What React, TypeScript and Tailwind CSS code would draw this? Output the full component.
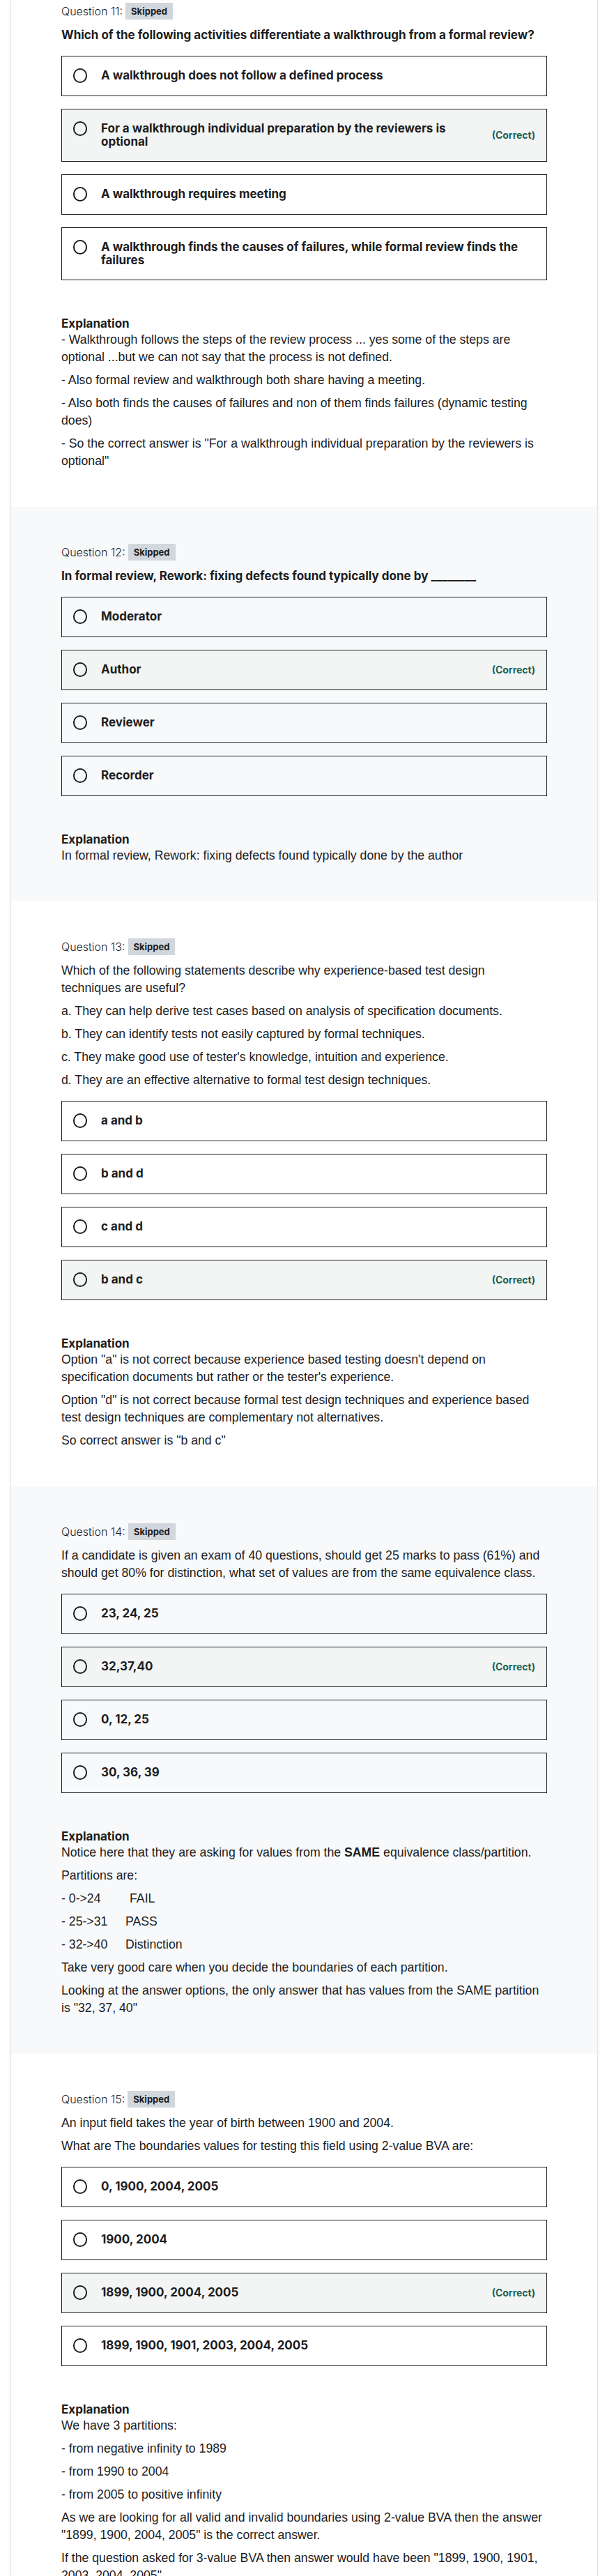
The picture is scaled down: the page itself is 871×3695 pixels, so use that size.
import type { ReactNode } from 'react';

type Option = { text: string; correct?: boolean };

type Question = {
  num: number;
  prompt: ReactNode[];
  boldPrompt?: boolean;
  options: Option[];
  explanation: ReactNode[];
};

const range = (label: string, wide: boolean, rest: string) => (
  <>
    <span className={`inline-block ${wide ? 'w-[98px]' : 'w-[92px]'}`}>{label}</span>
    {rest}
  </>
);

const questions: Question[] = [
  {
    num: 11,
    boldPrompt: true,
    prompt: ['Which of the following activities differentiate a walkthrough from a formal review?'],
    options: [
      { text: 'A walkthrough does not follow a defined process' },
      { text: 'For a walkthrough individual preparation by the reviewers is optional', correct: true },
      { text: 'A walkthrough requires meeting' },
      { text: 'A walkthrough finds the causes of failures, while formal review finds the failures' },
    ],
    explanation: [
      '- Walkthrough follows the steps of the review process ... yes some of the steps are optional ...but we can not say that the process is not defined.',
      '- Also formal review and walkthrough both share having a meeting.',
      '- Also both finds the causes of failures and non of them finds failures (dynamic testing does)',
      '- So the correct answer is "For a walkthrough individual preparation by the reviewers is optional"',
    ],
  },
  {
    num: 12,
    boldPrompt: true,
    prompt: ['In formal review, Rework: fixing defects found typically done by ________'],
    options: [
      { text: 'Moderator' },
      { text: 'Author', correct: true },
      { text: 'Reviewer' },
      { text: 'Recorder' },
    ],
    explanation: ['In formal review, Rework: fixing defects found typically done by the author'],
  },
  {
    num: 13,
    prompt: [
      'Which of the following statements describe why experience-based test design techniques are useful?',
      'a. They can help derive test cases based on analysis of specification documents.',
      'b. They can identify tests not easily captured by formal techniques.',
      "c. They make good use of tester's knowledge, intuition and experience.",
      'd. They are an effective alternative to formal test design techniques.',
    ],
    options: [
      { text: 'a and b' },
      { text: 'b and d' },
      { text: 'c and d' },
      { text: 'b and c', correct: true },
    ],
    explanation: [
      'Option "a" is not correct because experience based testing doesn\'t depend on specification documents but rather or the tester\'s experience.',
      'Option "d" is not correct because formal test design techniques and experience based test design techniques are complementary not alternatives.',
      'So correct answer is "b and c"',
    ],
  },
  {
    num: 14,
    prompt: [
      'If a candidate is given an exam of 40 questions, should get 25 marks to pass (61%) and should get 80% for distinction, what set of values are from the same equivalence class.',
    ],
    options: [
      { text: '23, 24, 25' },
      { text: '32,37,40', correct: true },
      { text: '0, 12, 25' },
      { text: '30, 36, 39' },
    ],
    explanation: [
      <>
        Notice here that they are asking for values from the <b>SAME</b> equivalence class/partition.
      </>,
      'Partitions are:',
      range('- 0->24', true, 'FAIL'),
      range('- 25->31', false, 'PASS'),
      range('- 32->40', false, 'Distinction'),
      'Take very good care when you decide the boundaries of each partition.',
      'Looking at the answer options, the only answer that has values from the SAME partition is "32, 37, 40"',
    ],
  },
  {
    num: 15,
    prompt: [
      'An input field takes the year of birth between 1900 and 2004.',
      'What are The boundaries values for testing this field using 2-value BVA are:',
    ],
    options: [
      { text: '0, 1900, 2004, 2005' },
      { text: '1900, 2004' },
      { text: '1899, 1900, 2004, 2005', correct: true },
      { text: '1899, 1900, 1901, 2003, 2004, 2005' },
    ],
    explanation: [
      'We have 3 partitions:',
      '- from negative infinity to 1989',
      '- from 1990 to 2004',
      '- from 2005 to positive infinity',
      'As we are looking for all valid and invalid boundaries using 2-value BVA then the answer "1899, 1900, 2004, 2005" is the correct answer.',
      'If the question asked for 3-value BVA then answer would have been "1899, 1900, 1901, 2003, 2004, 2005"',
    ],
  },
];

const body = "font-['Liberation_Sans',Arial,sans-serif] text-[17.7px] font-normal leading-[25px]";

function Radio() {
  return <span className="mt-[-1px] block h-[21px] w-5 shrink-0 rounded-full border-2 border-[#1c1d1f]" />;
}

function OptionRow({ opt }: { opt: Option }) {
  return (
    <div
      className={`flex items-center gap-4 border border-[#1c1d1f] px-4 py-[18px] ${
        opt.correct ? 'bg-[#f2f5f4]' : ''
      }`}
    >
      <div className="flex flex-1 items-start gap-5">
        <Radio />
        <span className="text-[17px] font-bold leading-[19px] text-[#1c1d1f]">{opt.text}</span>
      </div>
      {opt.correct && <span className="shrink-0 text-sm font-bold text-[#1e6055]">(Correct)</span>}
    </div>
  );
}

function QuestionBlock({ q, index, last }: { q: Question; index: number; last: boolean }) {
  const shaded = index % 2 === 1;
  return (
    <section
      className={`px-[72px] ${index === 0 ? 'pt-1' : 'pt-[53px]'} ${last ? 'pb-0' : 'pb-[53px]'} ${
        shaded ? 'bg-[#f7f9fa]' : 'bg-white'
      }`}
    >
      <div className="flex h-6 items-center">
        <span className="text-base font-light text-[#1c1d1f]">Question {q.num}:</span>
        <span className="ml-1 h-6 bg-[#d1d7dc] px-2 text-[13px] font-bold leading-6 text-[#1c1d1f]">Skipped</span>
      </div>

      <div
        className={`mt-[10px] space-y-2 text-[#1c1d1f] ${
          q.boldPrompt ? 'text-[17px] font-bold leading-[25px]' : body
        }`}
      >
        {q.prompt.map((p, i) => (
          <p key={i}>{p}</p>
        ))}
      </div>

      <div className="mt-[17px] flex flex-col gap-[18px]">
        {q.options.map((o, i) => (
          <OptionRow key={i} opt={o} />
        ))}
      </div>

      <div className="mt-[51px] text-[#1c1d1f]">
        <h3 className="text-[17px] font-bold leading-[22px]">Explanation</h3>
        <div className={`space-y-2 ${body}`}>
          {q.explanation.map((p, i) => (
            <p key={i}>{p}</p>
          ))}
        </div>
      </div>
    </section>
  );
}

export default function App() {
  return (
    <div className="min-h-screen bg-white font-['Inter',sans-serif]">
      <div className="ml-[15px] mr-[13px] overflow-hidden border-x border-[#e2e5e8] shadow-[0_0_4px_rgba(0,0,0,0.08)]">
        {questions.map((q, i) => (
          <QuestionBlock key={q.num} q={q} index={i} last={i === questions.length - 1} />
        ))}
      </div>
    </div>
  );
}
